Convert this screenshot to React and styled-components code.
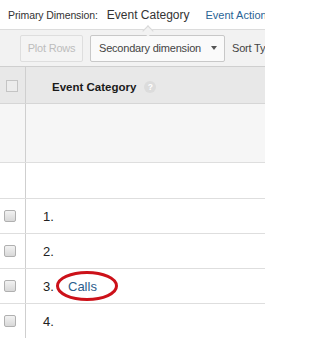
import React from "react";
import styled, { createGlobalStyle } from "styled-components";

const GlobalStyle = createGlobalStyle`
  html, body {
    margin: 0;
    padding: 0;
    background: #fff;
  }
  body {
    font-family: "Liberation Sans", Arial, sans-serif;
    color: #222;
  }
`;

const rows = [
  { n: 1, label: "" },
  { n: 2, label: "" },
  { n: 3, label: "Calls", circled: true },
  { n: 4, label: "" },
];

const App = () => {
  return (
    <>
      <GlobalStyle />
      <Page>
        <DimensionBar>
          <DimLabel>Primary Dimension:</DimLabel>
          <DimCurrent>Event Category</DimCurrent>
          <DimLink>Event Action</DimLink>
        </DimensionBar>
        <Toolbar>
          <ToolButton disabled>Plot Rows</ToolButton>
          <SelectButton>
            Secondary dimension
            <Caret />
          </SelectButton>
          <SortLabel>Sort Type:</SortLabel>
        </Toolbar>
        <Table>
          <HeaderRow>
            <CheckCell>
              <HeaderCheck />
            </CheckCell>
            <HeaderTitle>
              Event Category
              <Help>?</Help>
            </HeaderTitle>
          </HeaderRow>
          <SummaryRow>
            <CheckCell />
            <Cell />
          </SummaryRow>
          <BlankRow>
            <CheckCell />
            <Cell />
          </BlankRow>
          {rows.map((row) => (
            <DataRow key={row.n}>
              <CheckCell>
                <RowCheck />
              </CheckCell>
              <Cell>
                <Num>{row.n}.</Num>
                {row.label && (
                  <Label>
                    {row.label}
                    {row.circled && (
                      <Circle viewBox="0 0 64 32" width="64" height="32">
                        <ellipse
                          cx="32"
                          cy="16"
                          rx="29.5"
                          ry="13.5"
                          fill="none"
                          stroke="#cc1119"
                          strokeWidth="3"
                        />
                      </Circle>
                    )}
                  </Label>
                )}
              </Cell>
            </DataRow>
          ))}
        </Table>
      </Page>
    </>
  );
};

export default App;

const Page = styled.div`
  width: 265px;
  height: 338px;
  overflow: hidden;
  white-space: nowrap;
`;

const DimensionBar = styled.div`
  height: 29px;
  display: flex;
  align-items: center;
  padding-left: 8px;
  padding-top: 1px;
  box-sizing: border-box;
`;

const DimLabel = styled.span`
  font-size: 10.5px;
  letter-spacing: -0.1px;
  color: #333;
`;

const DimCurrent = styled.span`
  position: relative;
  margin-left: 9px;
  font-size: 12px;
  color: #333;
  &::after {
    content: "";
    position: absolute;
    left: 37px;
    top: 19px;
    width: 7px;
    height: 7px;
    background: #f2f2f2;
    border-left: 1px solid #d8d8d8;
    border-top: 1px solid #d8d8d8;
    transform: rotate(45deg);
  }
`;

const DimLink = styled.span`
  margin-left: 16px;
  font-size: 11px;
  color: #2a6496;
`;

const Toolbar = styled.div`
  height: 38px;
  box-sizing: border-box;
  background: #f2f2f2;
  border-top: 1px solid #dcdcdc;
  border-bottom: 1px solid #cfcfcf;
  display: flex;
  align-items: center;
  gap: 7px;
  padding-left: 20px;
`;

const ToolButton = styled.button`
  flex: none;
  height: 27px;
  width: 63px;
  box-sizing: border-box;
  border: 1px solid #dedede;
  border-radius: 2px;
  background: #f4f4f4;
  color: #bdbdbd;
  font-family: inherit;
  font-size: 11px;
  letter-spacing: -0.2px;
  padding: 0;
`;

const SelectButton = styled.button`
  height: 27px;
  width: 135px;
  flex: none;
  box-sizing: border-box;
  border: 1px solid #c8c8c8;
  border-radius: 2px;
  background: #fafafa;
  color: #444;
  font-family: inherit;
  font-size: 11px;
  letter-spacing: -0.2px;
  display: flex;
  align-items: center;
  padding: 0 0 0 8px;
`;

const Caret = styled.span`
  margin-left: 10px;
  width: 0;
  height: 0;
  border-left: 3.5px solid transparent;
  border-right: 3.5px solid transparent;
  border-top: 4px solid #555;
`;

const SortLabel = styled.span`
  flex: none;
  font-size: 11px;
  letter-spacing: -0.2px;
  color: #444;
`;

const Table = styled.div``;

const Row = styled.div`
  display: flex;
  box-sizing: border-box;
`;

const HeaderRow = styled(Row)`
  height: 37px;
  background: #e8e8e8;
  border-bottom: 1px solid #d6d6d6;
`;

const SummaryRow = styled(Row)`
  height: 59px;
  background: #f6f6f6;
  border-bottom: 1px solid #dedede;
`;

const BlankRow = styled(Row)`
  height: 35px;
  background: #fff;
`;

const DataRow = styled(Row)`
  height: 35px;
  border-top: 1px solid #dedede;
`;

const CheckCell = styled.div`
  width: 25px;
  flex: none;
  border-right: 1px solid #cfcfcf;
  display: flex;
  align-items: center;
  justify-content: center;
`;

const Cell = styled.div`
  flex: 1;
  display: flex;
  align-items: center;
  padding-left: 17px;
`;

const HeaderCheck = styled.span`
  width: 12px;
  height: 12px;
  box-sizing: border-box;
  border: 1px solid #c4c4c4;
  background: #ececec;
  margin-right: 2px;
  margin-top: 1px;
`;

const RowCheck = styled.span`
  width: 12px;
  height: 12px;
  box-sizing: border-box;
  border: 1px solid #b0b0b0;
  border-radius: 2px;
  background: linear-gradient(#f2f2f2, #d8d8d8);
  margin-right: 6px;
`;

const HeaderTitle = styled(Cell)`
  padding-left: 26px;
  padding-top: 3px;
  font-size: 11.5px;
  font-weight: bold;
  color: #1a1a1a;
`;

const Help = styled.span`
  margin-left: 8px;
  width: 12px;
  height: 12px;
  border-radius: 50%;
  background: #dcdcdc;
  color: #fff;
  font-size: 8.5px;
  font-weight: bold;
  display: inline-flex;
  align-items: center;
  justify-content: center;
`;

const Num = styled.span`
  font-size: 13px;
  color: #222;
  width: 25px;
`;

const Label = styled.span`
  position: relative;
  font-size: 13px;
  color: #2b5d8c;
`;

const Circle = styled.svg`
  position: absolute;
  left: -13px;
  top: -9px;
`;
